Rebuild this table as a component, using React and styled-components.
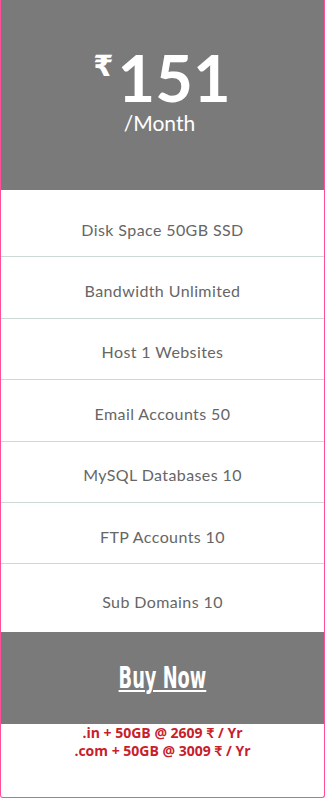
import React from "react";
import styled, { createGlobalStyle } from "styled-components";

const Global = createGlobalStyle`
  html, body { margin: 0; padding: 0; background: #fff; }
  body { font-family: Lato, "Open Sans", sans-serif; }
`;

const Card = styled.div`
  width: 325px;
  height: 798px;
  box-sizing: border-box;
  border: 1px solid #ff4f9b;
  border-top: none;
  border-radius: 0 0 3px 3px;
  display: flex;
  flex-direction: column;
  background: #fff;
`;

const Header = styled.div`
  height: 190px;
  flex: 0 0 190px;
  background: #7a7a7a;
  color: #fff;
  display: flex;
  flex-direction: column;
  align-items: center;
  padding-top: 50px;
  box-sizing: border-box;
`;

const PriceRow = styled.div`
  display: flex;
  align-items: flex-start;
  margin-left: -1px;
`;

const Currency = styled.span`
  font-family: "DejaVu Sans", sans-serif;
  font-weight: 700;
  font-size: 29px;
  line-height: 1;
  margin-top: 2px;
  margin-right: 4px;
`;

const Amount = styled.span`
  font-family: Lato, sans-serif;
  font-weight: 700;
  font-size: 65px;
  line-height: 54px;
`;

const Period = styled.div`
  font-family: Lato, sans-serif;
  font-size: 21px;
  line-height: 22px;
  margin-top: 8px;
  margin-left: -6px;
`;

const Features = styled.ul`
  list-style: none;
  margin: 0;
  padding: 6px 0 0;
  flex: 0 0 auto;
`;

const Feature = styled.li`
  box-sizing: border-box;
  padding-top: 6px;
  display: flex;
  align-items: center;
  justify-content: center;
  font-family: Lato, sans-serif;
  font-size: 16px;
  letter-spacing: 0.4px;
  color: #666;
  border-bottom: ${(p) => (p.$last ? "none" : "1px solid #cdd9d7")};
  height: ${(p) => (p.$last ? "67.6px" : "61.4px")};
`;

const BuyBand = styled.div`
  height: 92px;
  flex: 0 0 92px;
  background: #7a7a7a;
  display: flex;
  align-items: center;
  justify-content: center;
`;

const BuyLink = styled.a`
  display: inline-block;
  font-family: "DejaVu Sans Condensed", sans-serif;
  font-weight: 700;
  font-size: 30px;
  line-height: 34px;
  color: #fff;
  text-decoration: underline;
  text-underline-offset: 2px;
  text-decoration-thickness: 2px;
  transform: scaleX(0.66);
  cursor: pointer;
`;

const Offers = styled.div`
  padding-top: 0;
  text-align: center;
  font-family: "Open Sans", Lato, sans-serif;
  font-weight: 700;
  font-size: 14px;
  line-height: 18px;
  color: #c8202b;
`;

const features = [
  "Disk Space 50GB SSD",
  "Bandwidth Unlimited",
  "Host 1 Websites",
  "Email Accounts 50",
  "MySQL Databases 10",
  "FTP Accounts 10",
  "Sub Domains 10",
];

export default function App() {
  return (
    <>
      <Global />
      <Card>
        <Header>
          <PriceRow>
            <Currency>₹</Currency>
            <Amount>151</Amount>
          </PriceRow>
          <Period>/Month</Period>
        </Header>
        <Features>
          {features.map((f, i) => (
            <Feature key={f} $last={i === features.length - 1}>
              {f}
            </Feature>
          ))}
        </Features>
        <BuyBand>
          <BuyLink>Buy Now</BuyLink>
        </BuyBand>
        <Offers>
          <div>.in + 50GB @ 2609 ₹ / Yr</div>
          <div>.com + 50GB @ 3009 ₹ / Yr</div>
        </Offers>
      </Card>
    </>
  );
}
